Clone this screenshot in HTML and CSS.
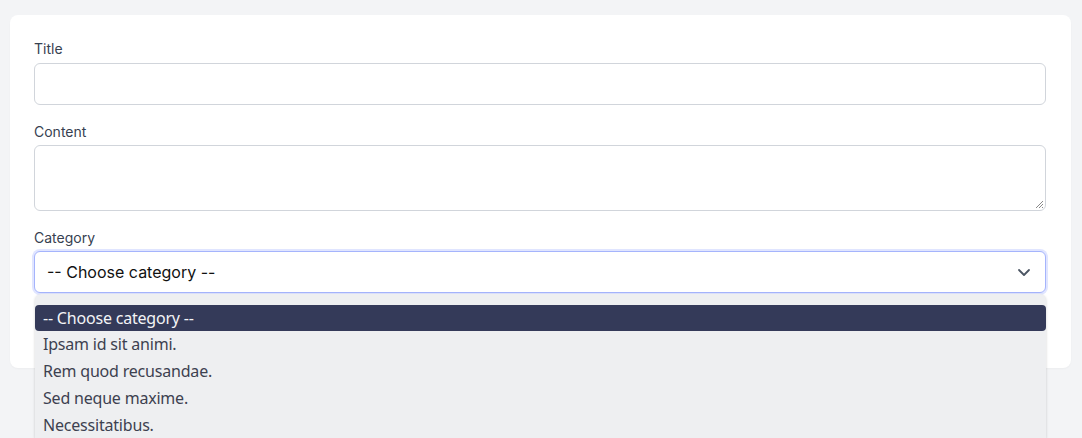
FILE: index.html
```html
<!DOCTYPE html>
<html>
<head>
<meta charset="utf-8">
<link rel="stylesheet" href="styles.css">
</head>
<body>
<div class="card">
  <div class="field">
    <label class="label">Title</label>
    <div class="input"></div>
  </div>
  <div class="field">
    <label class="label label-tight">Content</label>
    <div class="textarea">
      <svg class="grip" width="9" height="9" viewBox="0 0 9 9"><path d="M8 1L1 8M8 4L4 8M8 7L7 8" stroke="#8a8a8a" stroke-width="1"/></svg>
    </div>
  </div>
  <div class="field field-select">
    <label class="label label-tight">Category</label>
    <div class="select">
      <span class="select-text">-- Choose category --</span>
      <svg class="chevron" width="14" height="9" viewBox="0 0 14 9"><path d="M2 2l5 5 5-5" fill="none" stroke="#4b5563" stroke-width="1.8" stroke-linecap="round" stroke-linejoin="round"/></svg>
    </div>
    <div class="dropdown">
      <div class="option selected">-- Choose category --</div>
      <div class="option">Ipsam id sit animi.</div>
      <div class="option">Rem quod recusandae.</div>
      <div class="option">Sed neque maxime.</div>
      <div class="option">Necessitatibus.</div>
    </div>
  </div>
</div>
</body>
</html>
```
FILE: styles.css
```css
html, body {
  margin: 0;
  padding: 0;
  background: #f3f4f6;
  height: 100%;
  overflow: hidden;
}
body {
  padding: 15px 11px 0 10px;
  box-sizing: border-box;
  font-family: Inter, "Liberation Sans", sans-serif;
}
.card {
  background: #ffffff;
  border-radius: 8px;
  padding: 24px 25px 24px 24px;
  height: 353px;
  box-sizing: border-box;
  display: flex;
  flex-direction: column;
  box-shadow: 0 1px 2px rgba(0,0,0,0.03);
}
.field {
  display: flex;
  flex-direction: column;
  margin-bottom: 17px;
}
.label {
  font-size: 14px;
  color: #374151;
  line-height: 20px;
  margin-bottom: 4px;
}
.label-tight {
  margin-bottom: 3px;
}
.input {
  height: 42px;
  box-sizing: border-box;
  border: 1px solid #d1d5db;
  border-radius: 6px;
  background: #fff;
}
.textarea {
  height: 66px;
  box-sizing: border-box;
  border: 1px solid #d1d5db;
  border-radius: 6px;
  background: #fff;
  position: relative;
}
.grip {
  position: absolute;
  right: 1px;
  bottom: 1px;
}
.field-select {
  position: relative;
  margin-bottom: 0;
}
.select {
  height: 42px;
  box-sizing: border-box;
  border: 1px solid #a5b4fc;
  border-radius: 6px;
  box-shadow: 0 0 0 2px #e0e5ff;
  background: #fff;
  display: flex;
  align-items: center;
  justify-content: space-between;
  padding: 0 14px 0 12px;
}
.select-text {
  font-size: 16px;
  color: #111111;
}
.chevron {
  display: block;
}
.dropdown {
  position: absolute;
  left: 1px;
  right: 0;
  top: 66px;
  height: 144px;
  box-sizing: border-box;
  overflow: hidden;
  background: #eeeff1;
  border-radius: 6px 6px 0 0;
  box-shadow: 0 1px 3px rgba(0,0,0,0.18);
  padding: 11px 0 0 0;
  z-index: 5;
}
.option {
  height: 27px;
  line-height: 27px;
  padding: 0 8px;
  font-family: "Noto Sans", "Open Sans", sans-serif;
  font-size: 16px;
  letter-spacing: -0.2px;
  color: #3d4150;
}
.option.selected {
  background: #343a59;
  color: #f3f4f6;
  border-radius: 4px;
  height: 26px;
  line-height: 26px;
}
```
